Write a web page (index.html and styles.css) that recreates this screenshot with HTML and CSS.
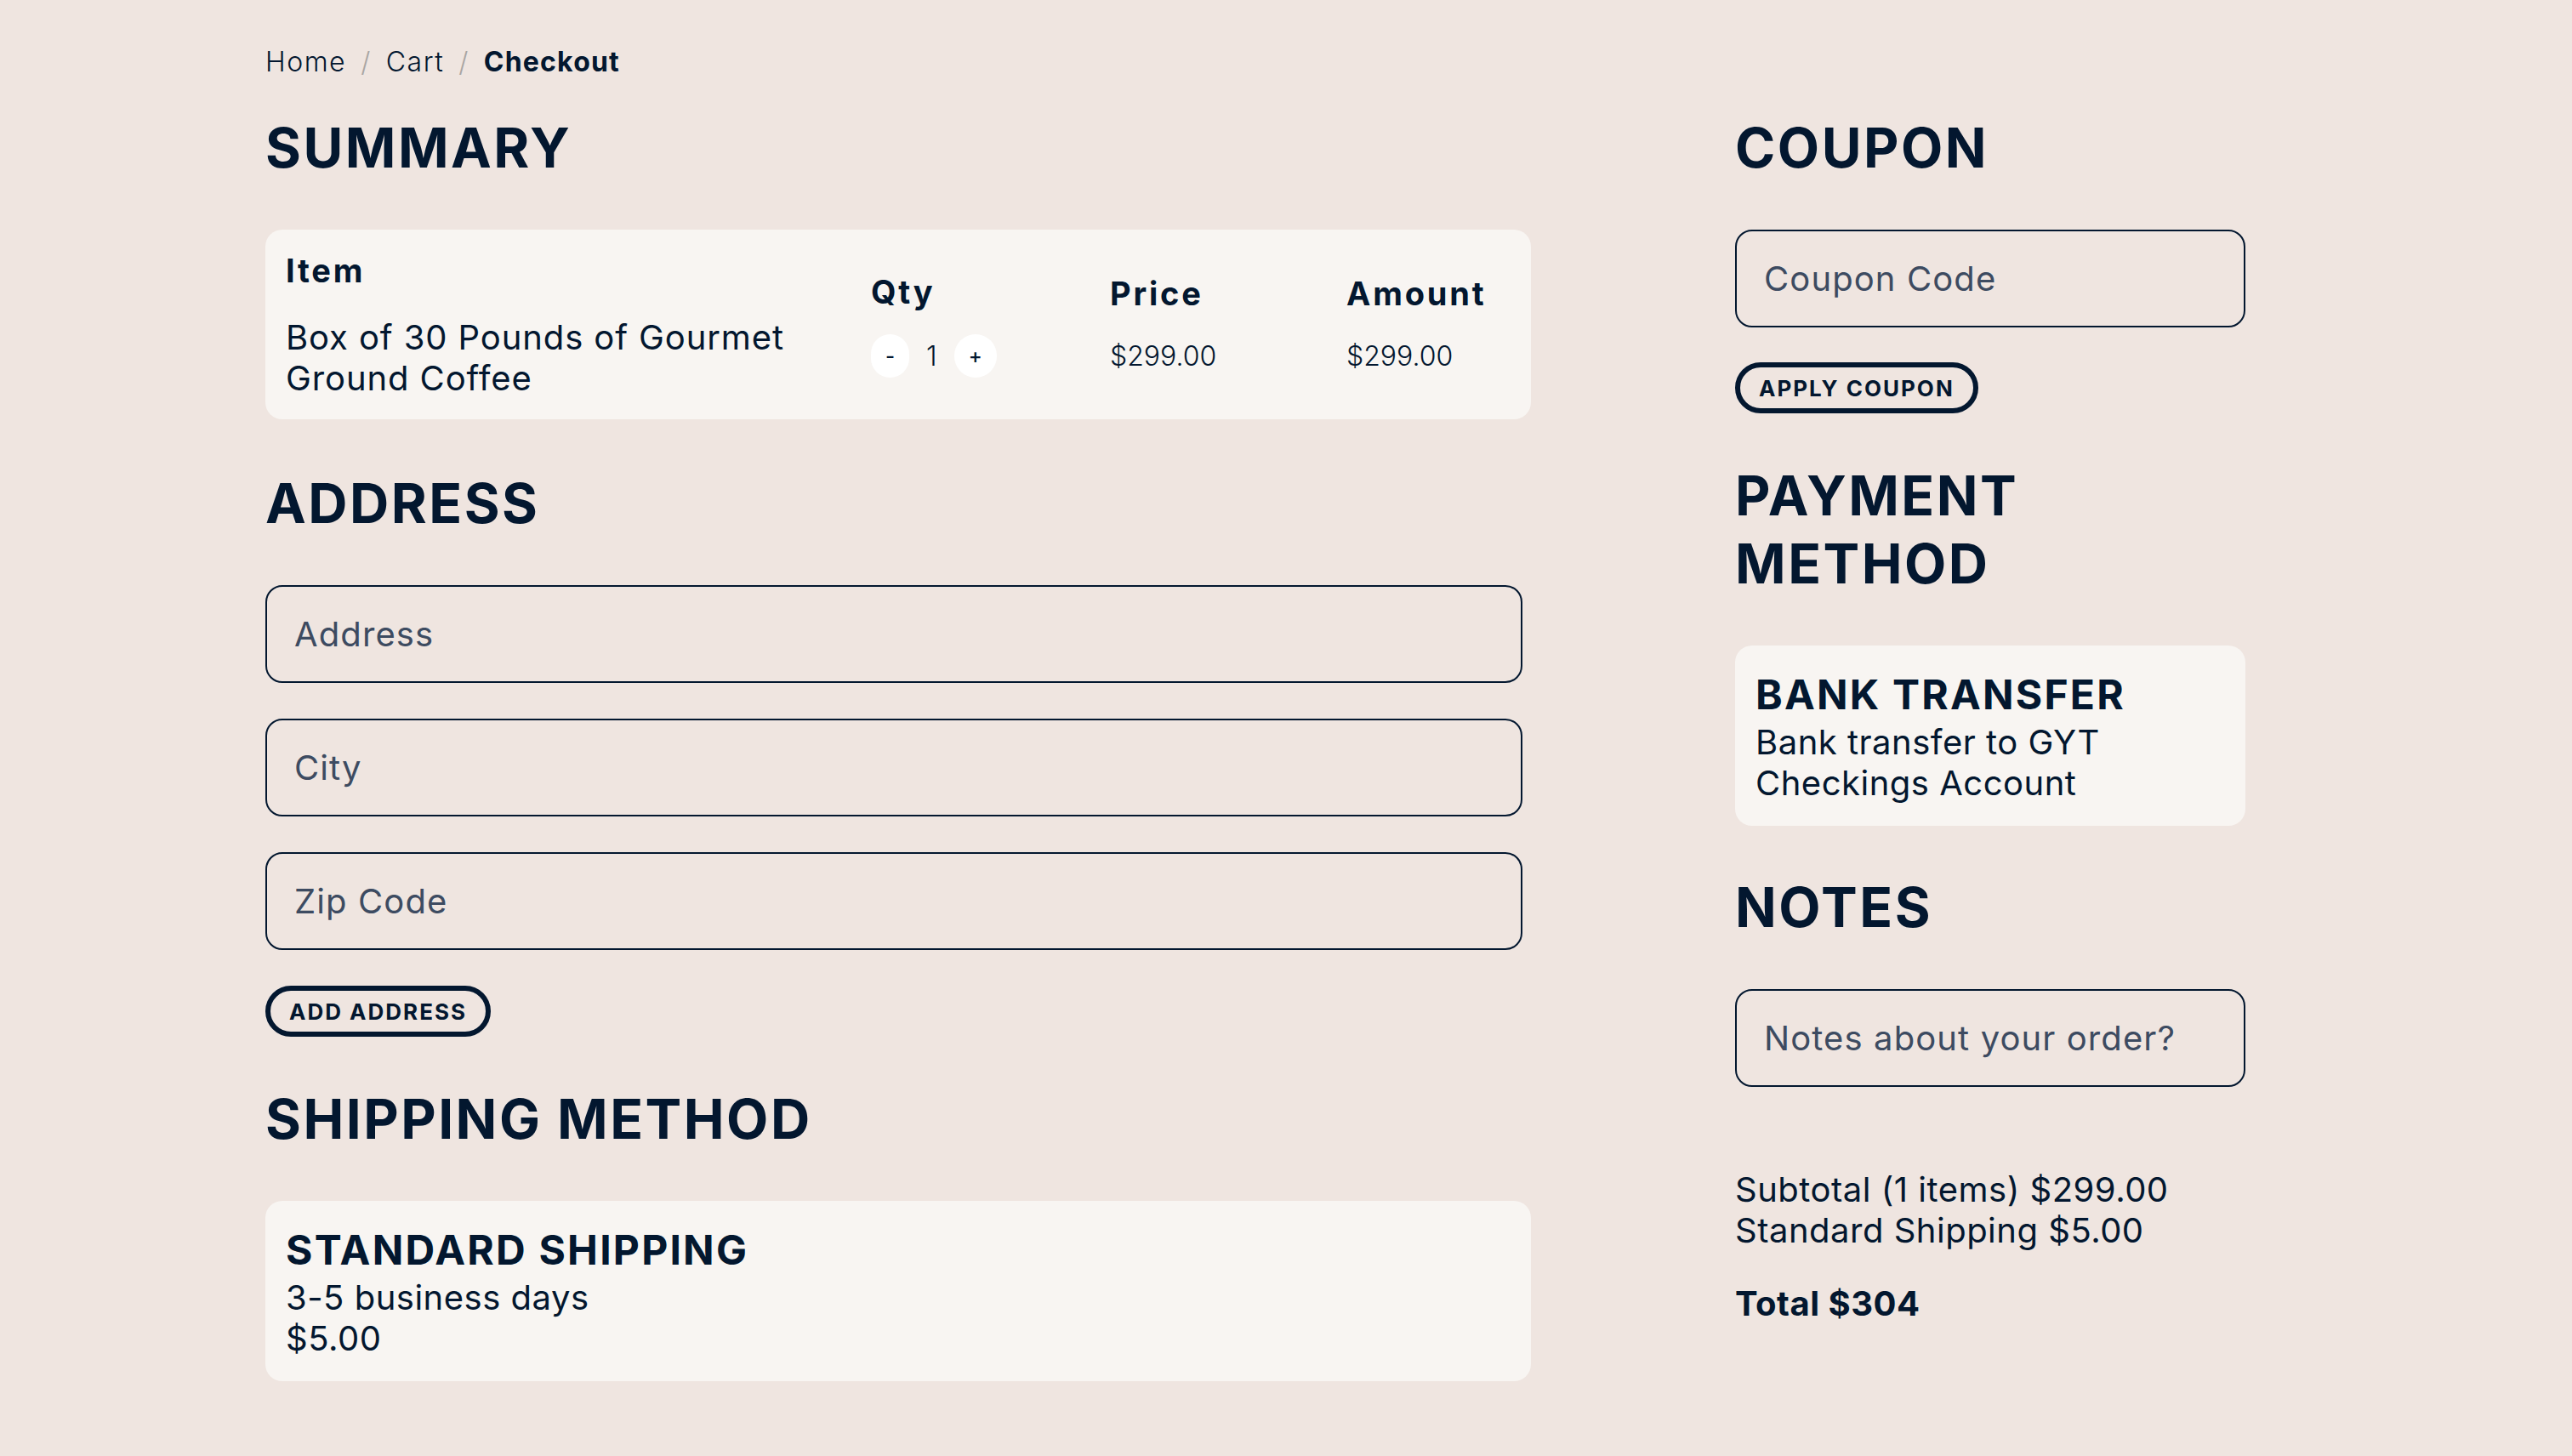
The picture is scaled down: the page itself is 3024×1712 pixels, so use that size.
FILE: index.html
```html
<!DOCTYPE html>
<html lang="en">
<head>
  <meta charset="UTF-8">
  <meta name="viewport" content="width=device-width, initial-scale=1.0">
  <title>Checkout</title>
  <link rel="stylesheet" href="styles.css">
</head>
<body>
<div class="page">
  <nav class="breadcrumb">
    <a href="#">Home</a>
    <span class="sep">/</span>
    <a href="#">Cart</a>
    <span class="sep">/</span>
    <span class="current">Checkout</span>
  </nav>

  <div class="checkout">
    <div class="main-col">
      <h2 class="section-title">Summary</h2>
      <div class="card summary">
        <div class="col col-item">
          <div class="col-title">Item</div>
          <div class="item-name">Box of 30 Pounds of Gourmet<br>Ground Coffee</div>
        </div>
        <div class="col">
          <div class="col-title">Qty</div>
          <div class="qty">
            <button type="button" class="qty-btn">-</button>
            <span class="qty-value">1</span>
            <button type="button" class="qty-btn">+</button>
          </div>
        </div>
        <div class="col">
          <div class="col-title">Price</div>
          <div class="money">$299.00</div>
        </div>
        <div class="col">
          <div class="col-title">Amount</div>
          <div class="money">$299.00</div>
        </div>
      </div>

      <h2 class="section-title">Address</h2>
      <form class="address-form">
        <input type="text" class="field field-wide" placeholder="Address">
        <input type="text" class="field field-wide" placeholder="City">
        <input type="text" class="field field-wide" placeholder="Zip Code">
        <button type="button" class="btn-outline">Add Address</button>
      </form>

      <h2 class="section-title">Shipping Method</h2>
      <div class="card option">
        <h3>Standard Shipping</h3>
        <p>3-5 business days<br>$5.00</p>
      </div>
    </div>

    <div class="side-col">
      <h2 class="section-title">Coupon</h2>
      <input type="text" class="field" placeholder="Coupon Code">
      <button type="button" class="btn-outline">Apply Coupon</button>

      <h2 class="section-title">Payment Method</h2>
      <div class="card option">
        <h3>Bank Transfer</h3>
        <p>Bank transfer to GYT<br>Checkings Account</p>
      </div>

      <h2 class="section-title">Notes</h2>
      <input type="text" class="field notes" placeholder="Notes about your order?">

      <div class="totals">
        <p>Subtotal (1 items) $299.00<br>Standard Shipping $5.00</p>
        <p class="total">Total $304</p>
      </div>
    </div>
  </div>
</div>
</body>
</html>
```

FILE: styles.css
```css
body {
  margin: 0;
  background-color: #efe5e0;
  color: #03172f;
  font-family: Inter, "Open Sans", sans-serif;
}

.page {
  padding: 49px 312px 80px;
}

.breadcrumb {
  display: flex;
  align-items: center;
  font-size: 32px;
  line-height: 48px;
  font-weight: 300;
  letter-spacing: 1.5px;
}

.breadcrumb a {
  color: #03172f;
  text-decoration: none;
}

.breadcrumb .sep {
  color: #a9a5a3;
  margin: 0 17px;
}

.breadcrumb .current {
  font-weight: 700;
  letter-spacing: 1.2px;
}

.checkout {
  display: grid;
  grid-template-columns: 1488px 600px;
  column-gap: 240px;
  margin-top: 37px;
}

.section-title {
  margin: 0 0 56px;
  font-size: 64px;
  line-height: 80px;
  font-weight: 700;
  text-transform: uppercase;
  letter-spacing: 2.5px;
}

.card {
  background-color: #f8f5f2;
  border-radius: 20px;
}

/* summary table */
.summary {
  display: grid;
  grid-template-columns: 688px 281px 278px 1fr;
  align-items: center;
  padding: 24px;
  margin-bottom: 59px;
}

.col-title {
  font-size: 38px;
  line-height: 48px;
  font-weight: 700;
  letter-spacing: 2.8px;
  margin-bottom: 26px;
}

.col-item .col-title {
  margin-bottom: 31px;
}

.item-name {
  font-size: 40px;
  line-height: 48px;
  letter-spacing: 0.9px;
}

.money {
  font-size: 32px;
  line-height: 48px;
  font-weight: 300;
}

.qty {
  display: flex;
  align-items: center;
  gap: 20px;
}

.qty-btn {
  height: 51px;
  padding: 0 17px;
  border: none;
  border-radius: 26px;
  background-color: #fff;
  color: #03172f;
  font-family: inherit;
  font-size: 24px;
  font-weight: 500;
  cursor: pointer;
}

.qty-value {
  font-size: 32px;
  font-weight: 300;
}

/* inputs and buttons */
.field {
  display: block;
  box-sizing: border-box;
  width: 100%;
  height: 115px;
  margin: 0 0 41px;
  padding: 0 32px;
  border: 2px solid #03172f;
  border-radius: 20px;
  background: transparent;
  color: #03172f;
  font-family: inherit;
  font-size: 40px;
  letter-spacing: 1.1px;
}

.field-wide {
  width: calc(100% - 10px);
  margin-bottom: 42px;
}

.field::placeholder {
  color: #3d4b61;
  opacity: 1;
}

.field.notes {
  margin-bottom: 0;
}

.address-form {
  margin: 0;
}

.btn-outline {
  display: block;
  height: 60px;
  margin-bottom: 57px;
  padding: 0 22px;
  border: 6px solid #03172f;
  border-radius: 30px;
  background: transparent;
  color: #03172f;
  font-family: inherit;
  font-size: 26px;
  font-weight: 700;
  letter-spacing: 2px;
  text-transform: uppercase;
  cursor: pointer;
}

/* shipping / payment option */
.option {
  padding: 28px 24px 26px;
}

.option h3 {
  margin: 0 0 2px;
  font-size: 48px;
  line-height: 60px;
  font-weight: 700;
  letter-spacing: 2.2px;
  text-transform: uppercase;
}

.option p {
  margin: 0;
  font-size: 40px;
  line-height: 48px;
  letter-spacing: 0.5px;
}

.side-col .option {
  margin-bottom: 56px;
}

.totals {
  margin-top: 97px;
  font-size: 40px;
  line-height: 48px;
  letter-spacing: 0.5px;
}

.totals p {
  margin: 0;
}

.totals .total {
  margin-top: 38px;
  font-weight: 700;
}
```
